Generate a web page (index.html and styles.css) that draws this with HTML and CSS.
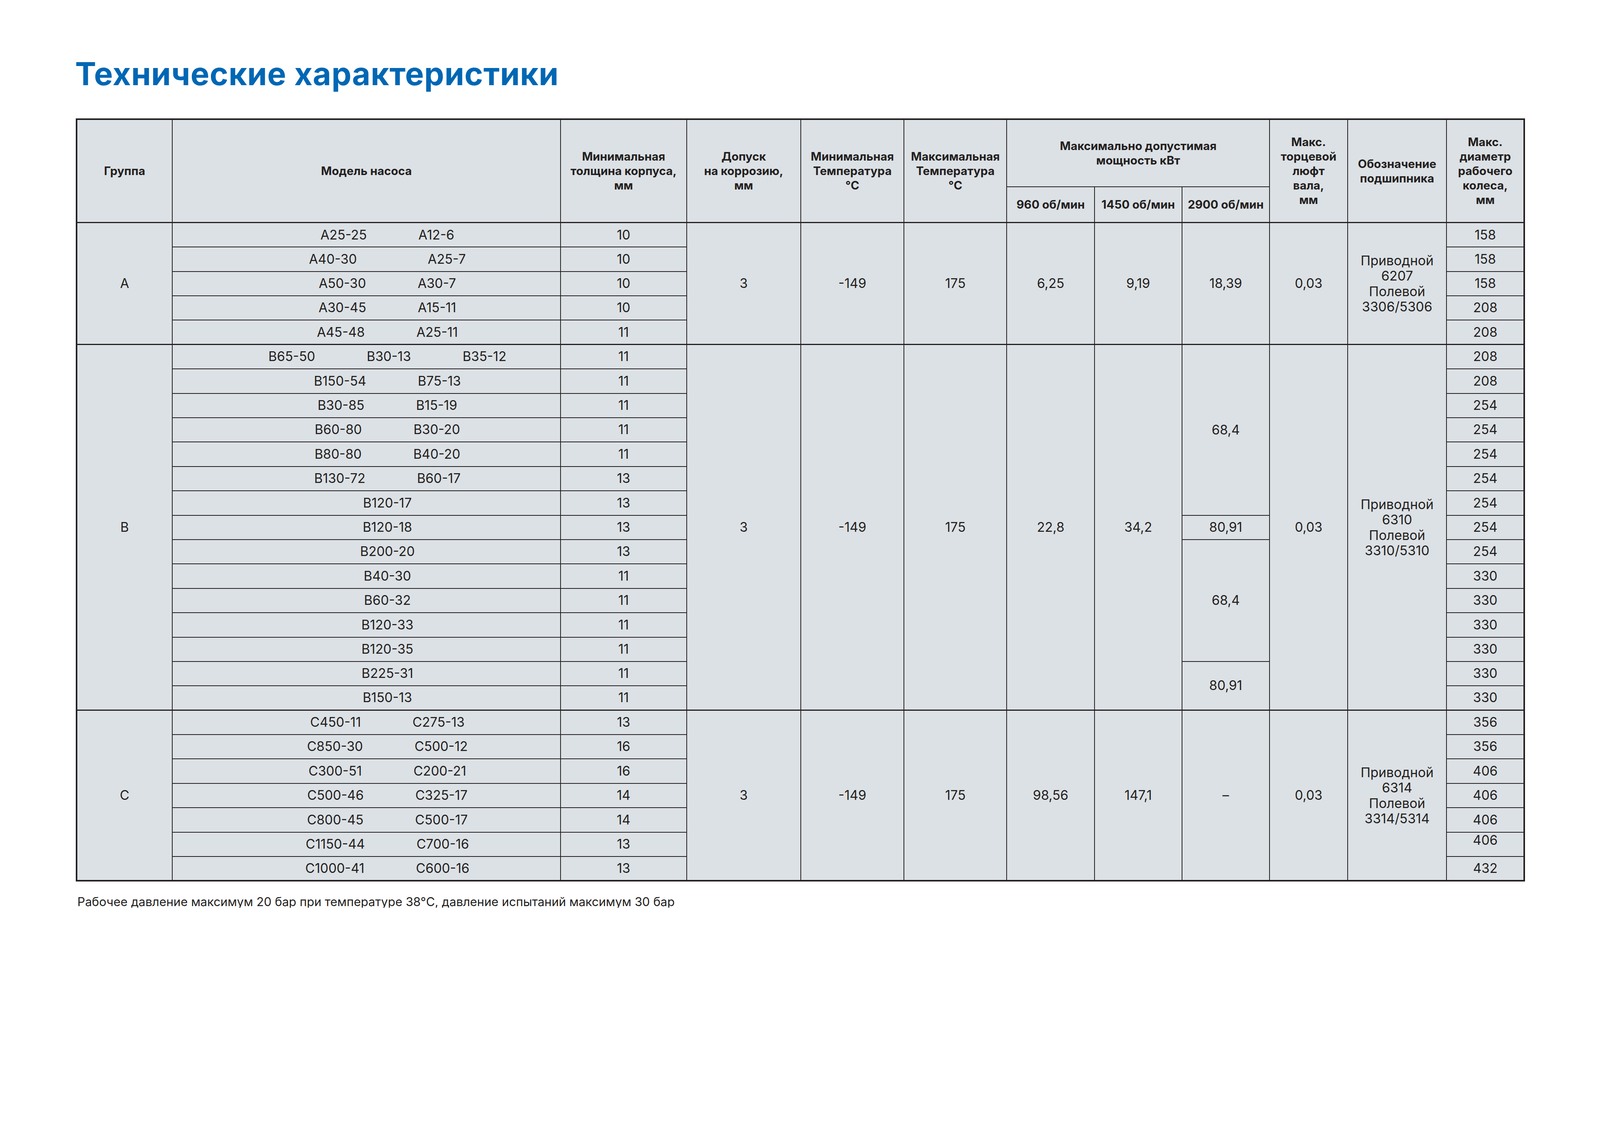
FILE: index.html
```html
<!DOCTYPE html>
<html lang="ru">
<head>
<meta charset="utf-8">
<title>Технические характеристики</title>
<link rel="stylesheet" href="styles.css">
</head>
<body>
<div class="page">
<h1 class="title">Технические характеристики</h1>
<table class="spec">
<colgroup>
<col class="c-grp"><col class="c-model"><col class="c-thick"><col class="c-corr"><col class="c-tmin"><col class="c-tmax"><col class="c-p1"><col class="c-p2"><col class="c-p3"><col class="c-play"><col class="c-bear"><col class="c-diam">
</colgroup>
<thead>
<tr class="h1">
<th rowspan="2">Группа</th>
<th rowspan="2">Модель насоса</th>
<th rowspan="2">Минимальная<br>толщина корпуса,<br>мм</th>
<th rowspan="2">Допуск<br>на коррозию,<br>мм</th>
<th rowspan="2">Минимальная<br>Температура<br>°C</th>
<th rowspan="2">Максимальная<br>Температура<br>°C</th>
<th colspan="3">Максимально допустимая<br>мощность кВт</th>
<th rowspan="2">Макс.<br>торцевой<br>люфт<br>вала,<br>мм</th>
<th rowspan="2">Обозначение<br>подшипника</th>
<th rowspan="2">Макс.<br>диаметр<br>рабочего<br>колеса,<br>мм</th>
</tr>
<tr class="h2"><th>960 об/мин</th><th>1450 об/мин</th><th>2900 об/мин</th></tr>
</thead>
<tbody>
<tr><td rowspan="5">A</td><td><div class="models"><span>A25-25</span><span>A12-6</span></div></td><td>10</td><td rowspan="5">3</td><td rowspan="5">-149</td><td rowspan="5">175</td><td rowspan="5">6,25</td><td rowspan="5">9,19</td><td rowspan="5">18,39</td><td rowspan="5">0,03</td><td rowspan="5" class="bear">Приводной<br>6207<br>Полевой<br>3306/5306</td><td>158</td></tr>
<tr><td><div class="models wide"><span>A40-30</span><span>A25-7</span></div></td><td>10</td><td>158</td></tr>
<tr><td><div class="models"><span>A50-30</span><span>A30-7</span></div></td><td>10</td><td>158</td></tr>
<tr><td><div class="models"><span>A30-45</span><span>A15-11</span></div></td><td>10</td><td>208</td></tr>
<tr><td><div class="models"><span>A45-48</span><span>A25-11</span></div></td><td>11</td><td>208</td></tr>
</tbody>
<tbody>
<tr><td rowspan="15">B</td><td><div class="models"><span>B65-50</span><span>B30-13</span><span>B35-12</span></div></td><td>11</td><td rowspan="15">3</td><td rowspan="15">-149</td><td rowspan="15">175</td><td rowspan="15">22,8</td><td rowspan="15">34,2</td><td rowspan="7">68,4</td><td rowspan="15">0,03</td><td rowspan="15" class="bear">Приводной<br>6310<br>Полевой<br>3310/5310</td><td>208</td></tr>
<tr><td><div class="models"><span>B150-54</span><span>B75-13</span></div></td><td>11</td><td>208</td></tr>
<tr><td><div class="models"><span>B30-85</span><span>B15-19</span></div></td><td>11</td><td>254</td></tr>
<tr><td><div class="models"><span>B60-80</span><span>B30-20</span></div></td><td>11</td><td>254</td></tr>
<tr><td><div class="models"><span>B80-80</span><span>B40-20</span></div></td><td>11</td><td>254</td></tr>
<tr><td><div class="models"><span>B130-72</span><span>B60-17</span></div></td><td>13</td><td>254</td></tr>
<tr><td><div class="models"><span>B120-17</span></div></td><td>13</td><td>254</td></tr>
<tr><td><div class="models"><span>B120-18</span></div></td><td>13</td><td>80,91</td><td>254</td></tr>
<tr><td><div class="models"><span>B200-20</span></div></td><td>13</td><td rowspan="5">68,4</td><td>254</td></tr>
<tr><td><div class="models"><span>B40-30</span></div></td><td>11</td><td>330</td></tr>
<tr><td><div class="models"><span>B60-32</span></div></td><td>11</td><td>330</td></tr>
<tr><td><div class="models"><span>B120-33</span></div></td><td>11</td><td>330</td></tr>
<tr><td><div class="models"><span>B120-35</span></div></td><td>11</td><td>330</td></tr>
<tr><td><div class="models"><span>B225-31</span></div></td><td>11</td><td rowspan="2">80,91</td><td>330</td></tr>
<tr><td><div class="models"><span>B150-13</span></div></td><td>11</td><td>330</td></tr>
</tbody>
<tbody>
<tr><td rowspan="7">C</td><td><div class="models"><span>C450-11</span><span>C275-13</span></div></td><td>13</td><td rowspan="7">3</td><td rowspan="7">-149</td><td rowspan="7">175</td><td rowspan="7">98,56</td><td rowspan="7">147,1</td><td rowspan="7">–</td><td rowspan="7">0,03</td><td rowspan="7" class="bear">Приводной<br>6314<br>Полевой<br>3314/5314</td><td>356</td></tr>
<tr><td><div class="models"><span>C850-30</span><span>C500-12</span></div></td><td>16</td><td>356</td></tr>
<tr><td><div class="models"><span>C300-51</span><span>C200-21</span></div></td><td>16</td><td>406</td></tr>
<tr><td><div class="models"><span>C500-46</span><span>C325-17</span></div></td><td>14</td><td>406</td></tr>
<tr><td><div class="models"><span>C800-45</span><span>C500-17</span></div></td><td>14</td><td>406</td></tr>
<tr><td><div class="models"><span>C1150-44</span><span>C700-16</span></div></td><td>13</td><td class="raised">406</td></tr>
<tr><td><div class="models"><span>C1000-41</span><span>C600-16</span></div></td><td>13</td><td>432</td></tr>
</tbody>
</table>
<p class="note">Рабочее давление максимум 20 бар при температуре 38°C, давление испытаний максимум 30 бар</p>
</div>
</body>
</html>
```
FILE: styles.css
```css
/* 1rem = 10 px of the 4962px-wide design */
html {
  font-size: calc(100vw / 496.2);
  overflow: hidden;
}
body {
  margin: 0;
  background: #ffffff;
  font-family: Inter, "Noto Sans", sans-serif;
  color: #231f20;
}
.page {
  padding: 18rem 0 0 23.3rem;
}
.title {
  margin: 0;
  font-size: 9.8rem;
  line-height: 9.8rem;
  font-weight: 700;
  letter-spacing: 0.1rem;
  color: #0067b4;
}
.spec {
  margin-top: 8.9rem;
  margin-left: 0.2rem;
  border-collapse: collapse;
  table-layout: fixed;
  width: 449.3rem;
  background: #dce1e5;
  border: 0.5rem solid #231f20;
}
.c-grp { width: 29.7rem; }
.c-model { width: 120.4rem; }
.c-thick { width: 39.1rem; }
.c-corr { width: 35.4rem; }
.c-tmin { width: 32rem; }
.c-tmax { width: 31.9rem; }
.c-p1 { width: 27.2rem; }
.c-p2 { width: 27.1rem; }
.c-p3 { width: 27.2rem; }
.c-play { width: 24.2rem; }
.c-bear { width: 30.7rem; }
.c-diam { width: 24.1rem; }
.spec th,
.spec td {
  border: 0.3rem solid #231f20;
  padding: 0;
  text-align: center;
  vertical-align: middle;
}
.spec th {
  font-size: 3.6rem;
  line-height: 4.5rem;
  font-weight: 700;
}
.spec td {
  font-size: 4.05rem;
  line-height: 4.8rem;
  font-weight: 400;
}
.spec td.bear {
  font-size: 4.1rem;
}
.spec thead {
  border-bottom: 0.45rem solid #231f20;
}
.spec tbody {
  border-top: 0.45rem solid #231f20;
}
.spec .h1 { height: 21rem; }
.spec .h2 { height: 11.1rem; }
.spec tbody tr { height: 7.56rem; }
.models {
  display: flex;
  justify-content: center;
  gap: 16rem;
  padding-left: 13rem;
}
.models.wide { gap: 22rem; }
.spec td.raised { padding-bottom: 2.4rem; }
.note {
  margin: 4.3rem 0 0 0.7rem;
  font-size: 3.76rem;
  line-height: 3.76rem;
}
```
